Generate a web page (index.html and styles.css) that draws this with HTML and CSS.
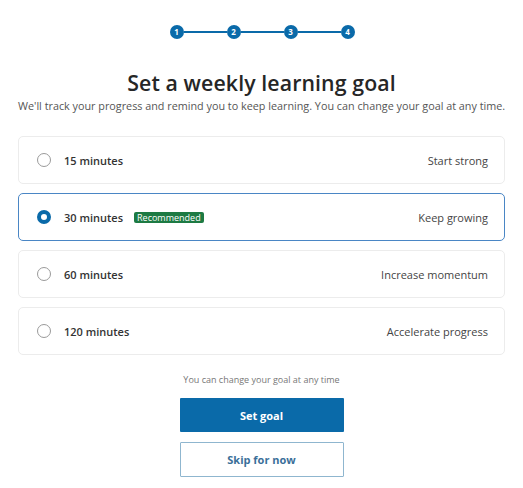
FILE: index.html
```html
<!DOCTYPE html>
<html>
<head>
<meta charset="utf-8">
<link rel="stylesheet" href="styles.css">
</head>
<body>
<div class="page">
  <div class="stepper">
    <span class="step">1</span><span class="bar"></span>
    <span class="step">2</span><span class="bar"></span>
    <span class="step">3</span><span class="bar"></span>
    <span class="step">4</span>
  </div>
  <h1 class="title">Set a weekly learning goal</h1>
  <p class="subtitle">We'll track your progress and remind you to keep learning. You can change your goal at any time.</p>
  <div class="options">
    <div class="option">
      <span class="radio"></span>
      <span class="label">15 minutes</span>
      <span class="hint">Start strong</span>
    </div>
    <div class="option selected">
      <span class="radio"></span>
      <span class="label">30 minutes</span>
      <span class="badge">Recommended</span>
      <span class="hint">Keep growing</span>
    </div>
    <div class="option">
      <span class="radio"></span>
      <span class="label">60 minutes</span>
      <span class="hint">Increase momentum</span>
    </div>
    <div class="option">
      <span class="radio"></span>
      <span class="label">120 minutes</span>
      <span class="hint">Accelerate progress</span>
    </div>
  </div>
  <p class="note">You can change your goal at any time</p>
  <div class="actions">
    <button class="btn primary">Set goal</button>
    <button class="btn secondary">Skip for now</button>
  </div>
</div>
</body>
</html>
```

FILE: styles.css
```css
* { box-sizing: border-box; }
html, body { margin: 0; padding: 0; background: #fff; }
body {
  font-family: "Open Sans", "Noto Sans", sans-serif;
  color: #2b2b2b;
  width: 523px;
}
.page {
  padding: 25px 18px 0;
  display: flex;
  flex-direction: column;
  align-items: stretch;
}
.stepper {
  display: flex;
  align-items: center;
  justify-content: center;
  height: 14px;
  padding-left: 1px;
}
.step {
  width: 14px;
  height: 14px;
  border-radius: 50%;
  background: #0a6aa9;
  color: #fff;
  font-size: 8px;
  font-weight: 700;
  line-height: 14px;
  text-align: center;
}
.bar {
  width: 43px;
  height: 2px;
  background: #0a6aa9;
}
.title {
  margin: 30px 0 0;
  text-align: center;
  font-size: 21.3px;
  font-weight: 600;
  line-height: 28px;
  color: #262626;
  letter-spacing: 0.1px;
}
.subtitle {
  margin: 1px 0 0;
  text-align: center;
  font-size: 10.8px;
  line-height: 16px;
  color: #555;
  white-space: nowrap;
}
.options {
  margin-top: 22px;
  display: flex;
  flex-direction: column;
  gap: 9px;
}
.option {
  height: 48px;
  border: 1px solid #ececec;
  border-radius: 5px;
  display: flex;
  align-items: center;
  padding: 0 16px 0 18px;
  font-size: 11px;
}
.option.selected {
  border: 1.5px solid #4a86c5;
}
.radio {
  width: 14px;
  height: 14px;
  border-radius: 50%;
  border: 1px solid #9a9a9a;
  flex: none;
}
.selected .radio {
  border: 4px solid #0a6aa9;
}
.label {
  margin-left: 13px;
  font-weight: 600;
  color: #333;
}
.badge {
  margin-left: 11px;
  background: #1d7a43;
  color: #fff;
  font-size: 9px;
  line-height: 11px;
  padding: 0 3px;
  border-radius: 2px;
}
.hint {
  margin-left: auto;
  color: #444;
}
.note {
  margin: 19px 0 0;
  text-align: center;
  font-size: 9px;
  line-height: 12px;
  color: #777;
}
.actions {
  margin-top: 12px;
  display: flex;
  flex-direction: column;
  align-items: center;
  gap: 10px;
}
.btn {
  width: 164px;
  height: 34px;
  font-family: inherit;
  font-size: 11px;
  font-weight: 700;
  border-radius: 1px;
  cursor: pointer;
}
.primary {
  background: #0a6aa9;
  color: #fff;
  border: none;
}
.secondary {
  background: #fff;
  color: #3a6f99;
  border: 1px solid #8fb6cf;
  height: 35px;
}
```
